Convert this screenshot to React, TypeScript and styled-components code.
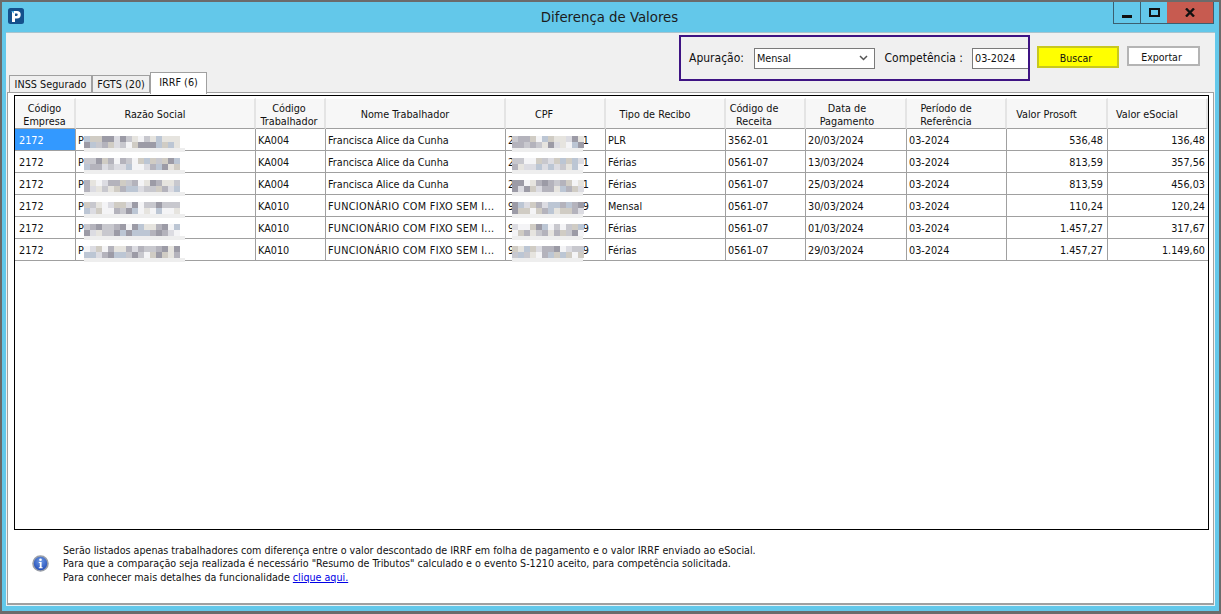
import styled, { createGlobalStyle } from 'styled-components';

const GlobalStyle = createGlobalStyle`
  html, body {
    margin: 0;
    padding: 0;
    background: #63c8ea;
  }
  body {
    font-family: 'DejaVu Sans', Tahoma, sans-serif;
    font-stretch: condensed;
    font-size: 10.75px;
    color: #111;
  }
`;

const Window = styled.div`
  box-sizing: border-box;
  width: 1221px;
  height: 614px;
  display: flex;
  flex-direction: column;
  background: #63c8ea;
  border: solid #6b6b6b;
  border-width: 2px 2px 3px 2px;
  overflow: hidden;
`;

const TitleBar = styled.div`
  position: relative;
  flex: 0 0 30px;
  display: flex;
  align-items: flex-start;
  justify-content: center;
`;

const Logo = styled.svg`
  position: absolute;
  left: 6px;
  top: 6px;
`;

const Title = styled.div`
  margin: 6px 2px 0 0;
  font-size: 14.8px;
  color: #1c1c1c;
`;

const WindowButtons = styled.div`
  position: absolute;
  right: 5px;
  top: 0;
  display: flex;
  height: 21px;
  border: 1px solid #3b5f70;
  border-top: 0;
`;

const WindowButton = styled.div<{ $width: number; $close?: boolean }>`
  width: ${(p) => p.$width}px;
  display: flex;
  align-items: center;
  justify-content: center;
  background: ${(p) => (p.$close ? '#c75b50' : 'transparent')};
  border-left: ${(p) => (p.$close ? '0' : '1px solid #3b5f70')};
  &:first-child {
    border-left: 0;
  }
`;

const Client = styled.div`
  flex: 0 0 572px;
  display: flex;
  flex-direction: column;
  margin: 0 4px;
  background: #f0f0f0;
  border-bottom: 1px solid #e8f4f8;
  border-top: 1px solid #a8c4cf;
`;

const TopRow = styled.div`
  flex: 0 0 59px;
  display: flex;
  justify-content: space-between;
  align-items: flex-end;
  padding: 0 15px 0 3px;
`;

const Tabs = styled.div`
  display: flex;
  position: relative;
  z-index: 1;
  margin-bottom: -2px;
  align-items: flex-end;
`;

const Tab = styled.div<{ $width: number; $active?: boolean }>`
  box-sizing: border-box;
  width: ${(p) => p.$width}px;
  height: ${(p) => (p.$active ? '22px' : '18px')};
  padding-top: ${(p) => (p.$active ? '2px' : '1px')};
  margin-bottom: ${(p) => (p.$active ? '0' : '1px')};
  line-height: 15px;
  text-align: center;
  background: ${(p) => (p.$active ? '#fff' : '#f0f0f0')};
  border: 1px solid #a0a0a0;
  border-bottom: ${(p) => (p.$active ? '0' : '1px solid #a0a0a0')};
`;

const Actions = styled.div`
  display: flex;
  align-items: flex-start;
  align-self: flex-start;
  margin-top: 2px;
  gap: 7px;
`;

const FilterBox = styled.div`
  box-sizing: border-box;
  width: 351px;
  height: 46px;
  display: flex;
  align-items: center;
  padding: 0 0 0 8px;
  border: 2px solid #3e1383;
  font-size: 12px;
`;

const FieldLabel = styled.label`
  white-space: nowrap;
`;

const chevron =
  "url(\"data:image/svg+xml,%3Csvg xmlns='http://www.w3.org/2000/svg' width='9' height='6'%3E%3Cpath d='M1 1l3.5 3.5L8 1' fill='none' stroke='%23555' stroke-width='1.5'/%3E%3C/svg%3E\")";

const ComboBox = styled.select`
  box-sizing: border-box;
  width: 121px;
  height: 21px;
  margin: 0 10px 0 10px;
  padding: 1px 0 0 2px;
  font: inherit;
  font-size: 10.75px;
  border: 1px solid #7a7a7a;
  color: #111;
  border-radius: 0;
  appearance: none;
  background: #fff ${chevron} no-repeat right 6px center;
`;

const TextInput = styled.input`
  box-sizing: border-box;
  width: 56px;
  height: 21px;
  margin-left: 9px;
  padding: 0 2px;
  font: inherit;
  font-size: 10.75px;
  border: 1px solid #7a7a7a;
  border-right: 0;
  color: #111;
  outline: none;
`;

const ActionButton = styled.button<{ $primary?: boolean }>`
  box-sizing: border-box;
  margin-top: 11px;
  width: ${(p) => (p.$primary ? '82px' : '73px')};
  height: ${(p) => (p.$primary ? '22px' : '20px')};
  margin-left: ${(p) => (p.$primary ? '0' : '1px')};
  padding: 1px 4px 0 0;
  font: inherit;
  font-size: 10.5px;
  color: #111;
  background: ${(p) => (p.$primary ? '#ffff00' : '#fff')};
  border: ${(p) => (p.$primary ? '2px solid #c8c81e' : '2px solid #b4b4b4')};
`;

const TabPage = styled.div`
  flex: 1;
  display: flex;
  flex-direction: column;
  background: #fff;
  margin: 0 1px;
  border: 1px solid #a0a0a0;
  border-bottom-width: 2px;
  padding: 2px 4px 0 6px;
  min-height: 0;
`;

const GridFrame = styled.div`
  box-sizing: border-box;
  flex: 0 0 435px;
  border: 1px solid #000;
  padding-top: 2px;
  overflow: hidden;
`;

const Grid = styled.table`
  table-layout: fixed;
  border-collapse: separate;
  border-spacing: 0;
  width: 1193px;
`;

const HeadCell = styled.th<{ $shift?: number }>`
  box-sizing: border-box;
  height: 31px;
  padding: 2px ${(p) => p.$shift ?? 0}px 0 0;
  font-weight: normal;
  line-height: 13px;
  text-align: center;
  background: #f7f7f7;
  border-top: 1px solid #fff;
  border-right: 2px solid #e4e4e4;
  border-bottom: 1px solid #a0a0a0;
`;

const Cell = styled.td<{ $right?: boolean; $selected?: boolean; $caps?: boolean }>`
  position: relative;
  box-sizing: border-box;
  height: 22px;
  padding: 2px 4px 0 2px;
  white-space: nowrap;
  overflow: hidden;
  text-align: ${(p) => (p.$right ? 'right' : 'left')};
  letter-spacing: ${(p) => (p.$caps ? '0.3px' : '0')};
  background: ${(p) => (p.$selected ? '#3399ff' : '#fff')};
  color: ${(p) => (p.$selected ? '#fff' : '#111')};
  border-right: 1px solid #a0a0a0;
  border-bottom: 1px solid #a0a0a0;
  &:first-child {
    padding-left: 4px;
  }
  &:last-child {
    border-right: 0;
    padding-right: 3px;
  }
`;

const MaskedCell = styled(Cell)`
  overflow: visible;
`;

const CpfValue = styled.div`
  display: flex;
  justify-content: space-between;
  width: 81px;
`;

const Mosaic = styled.div<{ $left: number; $cols: number; $band: number }>`
  position: absolute;
  z-index: 2;
  left: ${(p) => p.$left}px;
  top: 7px;
  display: grid;
  grid-template-columns: repeat(${(p) => p.$cols}, 6px);
  grid-auto-rows: 6px;
  &::after {
    content: '';
    grid-column: 1 / -1;
    height: 4px;
    width: ${(p) => p.$band}px;
    background: #eeeeee;
  }
`;

const Footer = styled.div`
  flex: 1;
  display: flex;
  align-items: flex-start;
  padding: 14px 0 0 18px;
`;

const InfoIcon = styled.svg`
  flex: none;
  margin: 11px 14px 0 0;
`;

const Notes = styled.div`
  line-height: 13.4px;
  font-size: 10.65px;
`;

const HelpLink = styled.a`
  color: #0000e6;
  text-decoration: underline;
  margin-left: 3px;
`;

const columns = [61, 180, 70, 180, 100, 120, 80, 101, 100, 101, 100];

const headers: { label: React.ReactNode; shift?: number }[] = [
  { label: <>Código<br />Empresa</> },
  { label: 'Razão Social', shift: 20 },
  { label: <>Código<br />Trabalhador</>, shift: 2 },
  { label: 'Nome Trabalhador', shift: 20 },
  { label: 'CPF', shift: 22 },
  { label: 'Tipo de Recibo', shift: 20 },
  { label: <>Código de<br />Receita</>, shift: 22 },
  { label: <>Data de<br />Pagamento</>, shift: 17 },
  { label: <>Período de<br />Referência</>, shift: 20 },
  { label: 'Valor Prosoft', shift: 20 },
  { label: 'Valor eSocial', shift: 20 },
];

const longName = 'FUNCIONÁRIO COM FIXO SEM I...';

const rows = [
  ['KA004', 'Francisca Alice da Cunha', '2', '1', 'PLR', '3562-01', '20/03/2024', '536,48', '136,48'],
  ['KA004', 'Francisca Alice da Cunha', '2', '1', 'Férias', '0561-07', '13/03/2024', '813,59', '357,56'],
  ['KA004', 'Francisca Alice da Cunha', '2', '1', 'Férias', '0561-07', '25/03/2024', '813,59', '456,03'],
  ['KA010', longName, '9', '9', 'Mensal', '0561-07', '30/03/2024', '110,24', '120,24'],
  ['KA010', longName, '9', '9', 'Férias', '0561-07', '01/03/2024', '1.457,27', '317,67'],
  ['KA010', longName, '9', '9', 'Férias', '0561-07', '29/03/2024', '1.457,27', '1.149,60'],
];

const shades = ['#f4f4f6', '#dcdce2', '#c8c8ce', '#b4b3bc', '#9c9ba6', '#d0ccc4', '#bcc6d4', '#e6e4df'];

// blurred-out names and CPFs: same cells on every render, seeded by position
const shadeAt = (seed: number, col: number, row: number) => {
  const n = Math.sin(seed * 12.9 + col * 78.2 + row * 37.7) * 43758.5;
  return shades[Math.floor((n - Math.floor(n)) * shades.length)];
};

const BlurMask = ({ seed, left, cols, band }: { seed: number; left: number; cols: number; band: number }) => (
  <Mosaic $left={left} $cols={cols} $band={band}>
    {Array.from({ length: cols * 2 }, (_, i) => (
      <span key={i} style={{ background: shadeAt(seed, i % cols, Math.floor(i / cols)) }} />
    ))}
  </Mosaic>
);

export default function App() {
  return (
    <>
      <GlobalStyle />
      <Window>
        <TitleBar>
          <Logo width="16" height="16" viewBox="0 0 16 16">
            <rect width="16" height="16" rx="2.5" fill="#14508c" />
            <path d="M4 3h5a3.6 3.6 0 0 1 0 7.4H7V14H4z" fill="#fff" />
            <path d="M7 5.6h1.6a1.1 1.1 0 0 1 0 2.3H7z" fill="#14508c" />
            <path d="M3 3h3v2.4z" fill="#4fb4e6" />
          </Logo>
          <Title>Diferença de Valores</Title>
          <WindowButtons>
            <WindowButton $width={26}>
              <svg width="10" height="10" viewBox="0 0 10 10">
                <rect x="0" y="7" width="10" height="3" fill="#111" />
              </svg>
            </WindowButton>
            <WindowButton $width={26}>
              <svg width="11" height="9" viewBox="0 0 11 9">
                <rect x="1" y="1" width="9" height="7" fill="none" stroke="#111" strokeWidth="2" />
              </svg>
            </WindowButton>
            <WindowButton $width={46} $close>
              <svg width="10" height="9" viewBox="0 0 10 9">
                <path d="M1 0.5l8 8M9 0.5l-8 8" stroke="#111" strokeWidth="2.4" />
              </svg>
            </WindowButton>
          </WindowButtons>
        </TitleBar>
        <Client>
          <TopRow>
            <Tabs>
              <Tab $width={83}>INSS Segurado</Tab>
              <Tab $width={58}>FGTS (20)</Tab>
              <Tab $width={57} $active>IRRF (6)</Tab>
            </Tabs>
            <Actions>
              <FilterBox>
                <FieldLabel>Apuração:</FieldLabel>
                <ComboBox defaultValue="Mensal">
                  <option>Mensal</option>
                </ComboBox>
                <FieldLabel>Competência :</FieldLabel>
                <TextInput defaultValue="03-2024" />
              </FilterBox>
              <ActionButton $primary>Buscar</ActionButton>
              <ActionButton>Exportar</ActionButton>
            </Actions>
          </TopRow>
          <TabPage>
            <GridFrame>
              <Grid>
                <colgroup>
                  {columns.map((w, i) => (
                    <col key={i} width={w} />
                  ))}
                </colgroup>
                <thead>
                  <tr>
                    {headers.map((h, i) => (
                      <HeadCell key={i} $shift={h.shift}>
                        {h.label}
                      </HeadCell>
                    ))}
                  </tr>
                </thead>
                <tbody>
                  {rows.map((r, i) => (
                    <tr key={i}>
                      <Cell $selected={i === 0}>2172</Cell>
                      <MaskedCell>
                        P
                        <BlurMask seed={i + 1} left={8} cols={16} band={101} />
                      </MaskedCell>
                      <Cell>{r[0]}</Cell>
                      <Cell $caps={r[1] === longName}>{r[1]}</Cell>
                      <MaskedCell>
                        <CpfValue>
                          <span>{r[2]}</span>
                          <span>{r[3]}</span>
                        </CpfValue>
                        <BlurMask seed={i + 21} left={6} cols={12} band={71} />
                      </MaskedCell>
                      <Cell>{r[4]}</Cell>
                      <Cell>{r[5]}</Cell>
                      <Cell>{r[6]}</Cell>
                      <Cell>03-2024</Cell>
                      <Cell $right>{r[7]}</Cell>
                      <Cell $right>{r[8]}</Cell>
                    </tr>
                  ))}
                </tbody>
              </Grid>
            </GridFrame>
            <Footer>
              <InfoIcon width="17" height="17" viewBox="0 0 17 17">
                <defs>
                  <radialGradient id="infoFill" cx="50%" cy="35%" r="65%">
                    <stop offset="0%" stopColor="#6f9be6" />
                    <stop offset="100%" stopColor="#1c47b4" />
                  </radialGradient>
                </defs>
                <circle cx="8.5" cy="8.5" r="7.5" fill="url(#infoFill)" stroke="#9a9fa8" strokeWidth="1.6" />
                <circle cx="8.5" cy="4.8" r="1.3" fill="#fff" />
                <path d="M6.8 7h2.8v5.2h1v1H6.8v-1h1V8h-1z" fill="#fff" />
              </InfoIcon>
              <Notes>
                Serão listados apenas trabalhadores com diferença entre o valor descontado de IRRF em folha de pagamento e o valor IRRF enviado ao eSocial.
                <br />
                Para que a comparação seja realizada é necessário "Resumo de Tributos" calculado e o evento S-1210 aceito, para competência solicitada.
                <br />
                Para conhecer mais detalhes da funcionalidade
                <HelpLink href="#">clique aqui.</HelpLink>
              </Notes>
            </Footer>
          </TabPage>
        </Client>
      </Window>
    </>
  );
}
